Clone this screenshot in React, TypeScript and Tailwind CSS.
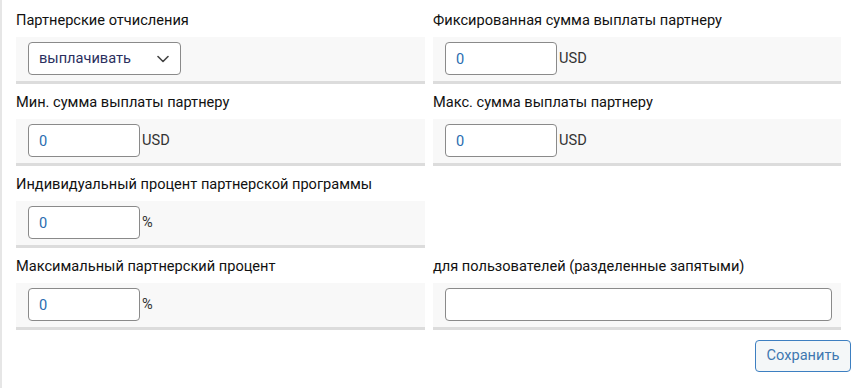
import React from "react";

const font = { fontFamily: "Roboto, 'Noto Sans', sans-serif" };

function Label({ children }: { children: React.ReactNode }) {
  return (
    <div className="pt-[8px] pb-[7px] text-[14.6px] leading-[20px] text-[#111]">
      {children}
    </div>
  );
}

function Band({ children }: { children?: React.ReactNode }) {
  return (
    <div className="h-[47px] bg-[#f8f8f8] border-b-[3px] border-[#dcdcdc] pt-[5px] pl-[12px] pr-[9px] flex items-start">
      {children}
    </div>
  );
}

function NumInput({ unit }: { unit: string }) {
  return (
    <div className="flex items-center">
      <input
        defaultValue="0"
        className="w-[112px] h-[33px] rounded-[4px] border border-[#8a8a8a] bg-white pl-[10px] text-[14.6px] text-[#2a6cb0] outline-none"
        style={font}
      />
      <span className="ml-[2px] text-[14.6px] text-[#333]">{unit}</span>
    </div>
  );
}

export default function App() {
  return (
    <div className="w-[868px] h-[388px] bg-white border-l-2 border-[#e6e6e6] pl-[14px] pt-[2px]" style={font}>
      <div className="grid grid-cols-[409px_408px] gap-x-[8px]">
        <div>
          <Label>Партнерские отчисления</Label>
          <Band>
            <div className="relative w-[153px] h-[33px] rounded-[4px] border border-[#8a8a8a] bg-white flex items-center pl-[10px] text-[14.6px] text-[#2b2f5e]">
              выплачивать
              <svg className="absolute right-[11px] top-[12px]" width="12" height="8" viewBox="0 0 12 8" fill="none">
                <path d="M1 1.5L6 6.5L11 1.5" stroke="#444" strokeWidth="1.6" strokeLinecap="round" strokeLinejoin="round" />
              </svg>
            </div>
          </Band>
        </div>
        <div>
          <Label>Фиксированная сумма выплаты партнеру</Label>
          <Band>
            <NumInput unit="USD" />
          </Band>
        </div>
        <div>
          <Label>Мин. сумма выплаты партнеру</Label>
          <Band>
            <NumInput unit="USD" />
          </Band>
        </div>
        <div>
          <Label>Макс. сумма выплаты партнеру</Label>
          <Band>
            <NumInput unit="USD" />
          </Band>
        </div>
        <div>
          <Label>Индивидуальный процент партнерской программы</Label>
          <Band>
            <NumInput unit="%" />
          </Band>
        </div>
        <div />
        <div>
          <Label>Максимальный партнерский процент</Label>
          <Band>
            <NumInput unit="%" />
          </Band>
        </div>
        <div>
          <Label>для пользователей (разделенные запятыми)</Label>
          <Band>
            <input
              className="w-full h-[33px] rounded-[4px] border border-[#8a8a8a] bg-white outline-none"
              style={font}
            />
          </Band>
        </div>
      </div>
      <div className="flex justify-end pr-[17px] mt-[10px]">
        <button
          className="w-[96px] h-[32px] rounded-[4px] border border-[#3d7fc1] bg-[#f4f7f8] text-[14.6px] text-[#3f77b0]"
          style={font}
        >
          Сохранить
        </button>
      </div>
    </div>
  );
}
